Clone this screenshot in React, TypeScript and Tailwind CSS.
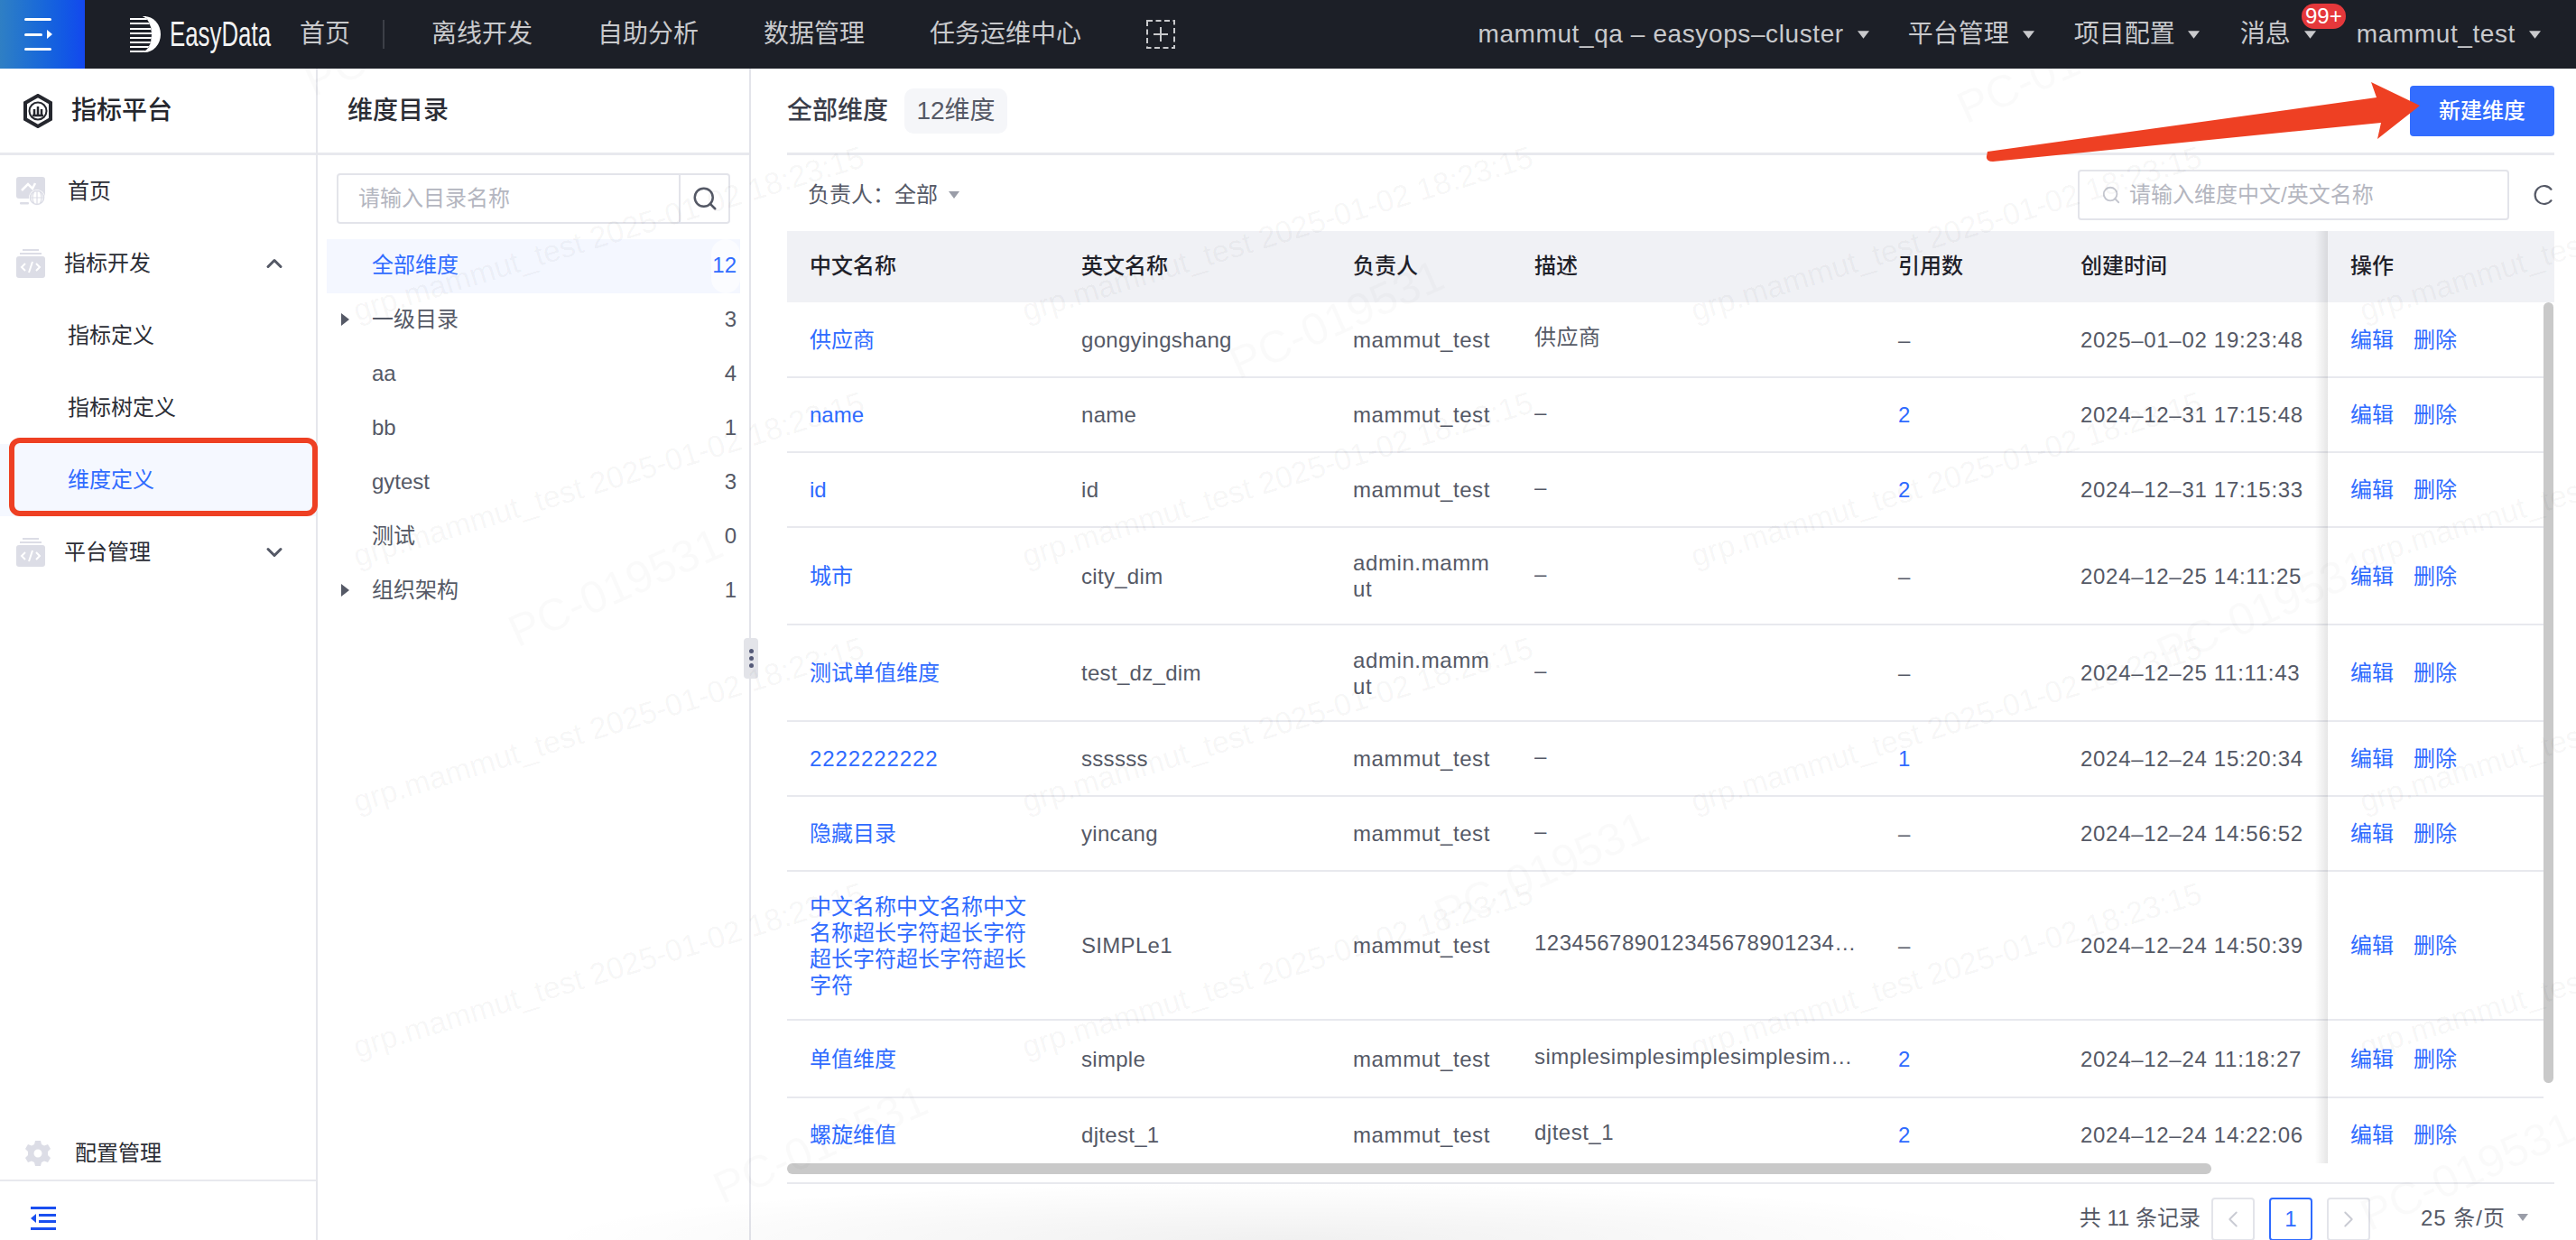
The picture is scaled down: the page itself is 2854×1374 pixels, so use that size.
import { Search, ChevronUp, ChevronDown, ChevronLeft, ChevronRight } from 'lucide-react'

const rows = [
  { name: '供应商', en: 'gongyingshang', owner: 'mammut_test', desc: '供应商', refs: '–', time: '2025–01–02 19:23:48', h: 'h-[84px]' },
  { name: 'name', en: 'name', owner: 'mammut_test', desc: '–', refs: '2', time: '2024–12–31 17:15:48', h: 'h-[83px]' },
  { name: 'id', en: 'id', owner: 'mammut_test', desc: '–', refs: '2', time: '2024–12–31 17:15:33', h: 'h-[83px]' },
  { name: '城市', en: 'city_dim', owner: 'admin.mammut', desc: '–', refs: '–', time: '2024–12–25 14:11:25', h: 'h-[108px]' },
  { name: '测试单值维度', en: 'test_dz_dim', owner: 'admin.mammut', desc: '–', refs: '–', time: '2024–12–25 11:11:43', h: 'h-[107px]' },
  { name: '2222222222', en: 'ssssss', owner: 'mammut_test', desc: '–', refs: '1', time: '2024–12–24 15:20:34', h: 'h-[83px]' },
  { name: '隐藏目录', en: 'yincang', owner: 'mammut_test', desc: '–', refs: '–', time: '2024–12–24 14:56:52', h: 'h-[83px]' },
  { name: '中文名称中文名称中文名称超长字符超长字符超长字符超长字符超长字符', en: 'SIMPLe1', owner: 'mammut_test', desc: '123456789012345678901234567890', refs: '–', time: '2024–12–24 14:50:39', h: 'h-[165px]' },
  { name: '单值维度', en: 'simple', owner: 'mammut_test', desc: 'simplesimplesimplesimplesimplesimple', refs: '2', time: '2024–12–24 11:18:27', h: 'h-[86px]' },
  { name: '螺旋维值', en: 'djtest_1', owner: 'mammut_test', desc: 'djtest_1', refs: '2', time: '2024–12–24 14:22:06', h: 'h-[83px]' },
]

const catalog = [
  { label: '一级目录', count: 3, arrow: true },
  { label: 'aa', count: 4 },
  { label: 'bb', count: 1 },
  { label: 'gytest', count: 3 },
  { label: '测试', count: 0 },
  { label: '组织架构', count: 1, arrow: true },
]

const grpMarks = [
  [398, 348], [1139, 348], [1880, 348], [2621, 348],
  [398, 620], [1139, 620], [1880, 620], [2621, 620],
  [398, 892], [1139, 892], [1880, 892], [2621, 892],
  [398, 1164], [1139, 1164], [1880, 1164], [2621, 1164],
]

const pcMarks = [
  [351, 116], [577, 726], [804, 1343], [1376, 429], [1603, 1040], [2182, 146], [2403, 750], [2629, 1373],
]

const Caret = ({ className }: { className: string }) => (
  <svg viewBox="0 0 12 8" className={className} fill="currentColor">
    <path d="M0 0h12L6 8z" />
  </svg>
)

const HomeIcon = () => (
  <svg viewBox="0 0 32 32" className="w-[32px] h-[32px] text-[#dcdde6]" fill="none">
    <rect x="0" y="0" width="32" height="24" rx="3" fill="currentColor" />
    <path d="M6 15l7-7 5 5 3-6" stroke="#fff" strokeWidth="2.5" />
    <rect x="4" y="28" width="10" height="2.5" rx="1" fill="currentColor" />
    <circle cx="23" cy="23" r="9" fill="#fff" />
    <circle cx="23" cy="23" r="7.5" stroke="currentColor" strokeWidth="1.6" />
    <path d="M15.5 23h15M23 15.5v15M19.5 17c-2 4-2 8 0 12M26.5 17c2 4 2 8 0 12" stroke="currentColor" strokeWidth="1.2" />
  </svg>
)

const CodeIcon = () => (
  <svg viewBox="0 0 32 32" className="w-[32px] h-[32px] text-[#dcdde6]" fill="none">
    <rect x="7" y="0" width="18" height="2" fill="currentColor" />
    <rect x="4" y="4" width="24" height="2" fill="currentColor" />
    <rect x="0" y="8" width="32" height="24" rx="3" fill="currentColor" />
    <path d="M10 16l-4 4 4 4M22 16l4 4-4 4M18 14l-4 12" stroke="#fff" strokeWidth="2" />
  </svg>
)

const NavItem = ({ label, className }: { label: string; className: string }) => (
  <span className={`text-[28px] text-[#c8c9cc] ${className}`}>{label}</span>
)

const App = () => {
  return (
    <div className="relative w-[2854px] h-[1374px] overflow-hidden flex flex-col bg-white font-['Liberation_Sans','Noto_Sans_CJK_SC',sans-serif] text-[24px] text-[#555966]">
      <header className="h-[76px] shrink-0 flex items-center bg-[#1c1f27]">
        <div className="w-[94px] h-full flex flex-col justify-center items-start gap-[10px] pl-[27px] bg-gradient-to-r from-[#2f7fc4] to-[#1447ee]">
          <div className="w-[30px] h-[3px] bg-white rounded-full" />
          <div className="flex items-center gap-[5px]">
            <div className="w-[20px] h-[3px] bg-white rounded-full" />
            <div className="w-0 h-0 border-y-[5px] border-y-transparent border-l-[6px] border-l-white" />
          </div>
          <div className="w-[30px] h-[3px] bg-white rounded-full" />
        </div>

        <svg viewBox="0 0 34 40" className="ml-[50px] w-[34px] h-[40px]" fill="#fff">
          <path d="M14 0h2a18 20 0 0 1 0 40h-2c8-3 10-12 10-20S22 3 14 0z" />
          <path d="M0 0h14c6 2 10 10 10 20s-4 18-10 20H0v-2h20v-3H0v-2h22v-3H0v-2h23v-3H0v-2h24v-3H0v-2h24v-3H0v-2h23V9H0V7h22V4H0V2h18V0z" />
        </svg>
        <div className="ml-[10px] w-[114px] h-[40px] flex items-center">
          <span className="inline-block origin-left scale-x-[0.68] text-[38px] text-[#f2f2f2] leading-none">EasyData</span>
        </div>

        <NavItem label="首页" className="ml-[30px]" />
        <div className="ml-[36px] w-[2px] h-[32px] bg-[#3c3f47]" />
        <NavItem label="离线开发" className="ml-[52px]" />
        <NavItem label="自助分析" className="ml-[72px]" />
        <NavItem label="数据管理" className="ml-[72px]" />
        <NavItem label="任务运维中心" className="ml-[72px]" />
        <svg viewBox="0 0 32 32" className="ml-[72px] w-[32px] h-[32px] text-[#c8c9cc]" fill="none" stroke="currentColor" strokeWidth="2">
          <rect x="1" y="1" width="30" height="30" strokeDasharray="6 3.5" />
          <path d="M16 8v16M8 16h16" />
        </svg>

        <div className="ml-auto flex items-center pr-[39px] text-[#c8c9cc]">
          <span className="text-[28px] tracking-[0.6px]">mammut_qa – easyops–cluster</span>
          <Caret className="ml-[15px] w-[13px] h-[9px]" />
          <NavItem label="平台管理" className="ml-[43px]" />
          <Caret className="ml-[15px] w-[13px] h-[9px]" />
          <NavItem label="项目配置" className="ml-[44px]" />
          <Caret className="ml-[14px] w-[13px] h-[9px]" />
          <NavItem label="消息" className="ml-[45px]" />
          <div className="relative ml-[15px] w-[13px] h-[9px]">
            <Caret className="w-[13px] h-[9px]" />
            <span className="absolute left-[-3px] top-[-30px] w-[49px] h-[28px] rounded-[14px] bg-[#e5383b] text-white text-[24px] leading-[28px] text-center">99+</span>
          </div>
          <span className="ml-[45px] text-[28px] tracking-[0.6px]">mammut_test</span>
          <Caret className="ml-[15px] w-[13px] h-[9px]" />
        </div>
      </header>

      <div className="flex-1 flex min-h-0">
        <aside className="w-[352px] shrink-0 flex flex-col border-r-2 border-[#e6e7ec] text-[#2b2d35]">
          <div className="h-[96px] shrink-0 flex items-center pl-[25px] border-b-[3px] border-[#e8e9ee]">
            <svg viewBox="0 0 34 38" className="w-[34px] h-[38px] text-[#25272e]" fill="none">
              <path d="M17 2l14 8v18l-14 8-14-8V10z" stroke="currentColor" strokeWidth="4" />
              <circle cx="17" cy="19" r="9.5" stroke="currentColor" strokeWidth="2" />
              <path d="M11 24h12M13 17v6M17 14v9M21 17v6" stroke="currentColor" strokeWidth="2.5" />
            </svg>
            <span className="ml-[20px] text-[28px] font-medium text-[#25272e]">指标平台</span>
          </div>
          <div className="h-[80px] flex items-center pl-[18px]">
            <HomeIcon />
            <span className="ml-[25px]">首页</span>
          </div>
          <div className="h-[80px] flex items-center pl-[18px]">
            <CodeIcon />
            <span className="ml-[21px]">指标开发</span>
            <ChevronUp className="ml-auto mr-[32px] w-[28px] h-[28px] text-[#555966]" strokeWidth={2.6} />
          </div>
          <div className="h-[80px] flex items-center pl-[75px]">指标定义</div>
          <div className="h-[80px] flex items-center pl-[75px]">指标树定义</div>
          <div className="h-[80px] flex items-center pl-[75px] bg-[#f5f8ff] text-[#2f6bff]">维度定义</div>
          <div className="h-[80px] flex items-center pl-[18px]">
            <CodeIcon />
            <span className="ml-[21px]">平台管理</span>
            <ChevronDown className="ml-auto mr-[32px] w-[28px] h-[28px] text-[#555966]" strokeWidth={2.6} />
          </div>

          <div className="mt-auto h-[70px] flex items-center pl-[28px] pt-[10px] border-b-2 border-[#e8e9ee]">
            <svg viewBox="0 0 28 28" className="w-[28px] h-[28px] text-[#dcdde6]" fill="currentColor">
              <path fillRule="evenodd" d="M11 0h6l1 4 3 1.500 4-1.500 3 5-3 3v4l3 3-3 5-4-1.500-3 1.500-1 4h-6l-1-4-3-1.500-4 1.500-3-5 3-3v-4l-3-3 3-5 4 1.500 3-1.500zM14 9.500a4.500 4.500 0 1 0 0 9 4.500 4.500 0 0 0 0-9z" />
            </svg>
            <span className="ml-[27px]">配置管理</span>
          </div>
          <div className="h-[65px] flex items-center pl-[34px] pt-[16px]">
            <svg viewBox="0 0 28 26" className="w-[28px] h-[26px] text-[#1a4ff0]" fill="currentColor">
              <rect width="28" height="3" />
              <rect x="9" y="8" width="19" height="3" />
              <rect x="9" y="15" width="19" height="3" />
              <rect y="23" width="28" height="3" />
              <path d="M0 13l6-5v10z" />
            </svg>
          </div>
        </aside>

        <section className="relative w-[480px] shrink-0 flex flex-col border-r-2 border-[#e3e4ea]">
          <div className="h-[96px] shrink-0 flex items-center pl-[33px] border-b-[3px] border-[#e8e9ee] text-[28px] font-medium text-[#2b2d35]">
            维度目录
          </div>
          <div className="mt-[20px] mx-[21px] h-[56px] flex border-2 border-[#e3e4ea] rounded-[4px]">
            <div className="flex-1 flex items-center pl-[22px] text-[#b4b6c0]">请输入目录名称</div>
            <div className="w-[55px] flex items-center justify-center border-l-2 border-[#e3e4ea]">
              <Search className="w-[30px] h-[30px] text-[#555966]" strokeWidth={2} />
            </div>
          </div>
          <div className="mt-[17px] mx-[10px] h-[60px] flex items-center justify-between pl-[50px] bg-[#f4f7ff] text-[#2f6bff]">
            <span className="pb-[2px]">全部维度</span>
            <span className="h-full w-[32px] flex items-center justify-end pr-[4px] pb-[2px] rounded-[16px] bg-white/60">12</span>
          </div>
          {catalog.map(item => (
            <div key={item.label} className="relative mx-[10px] h-[60px] flex items-center justify-between pl-[50px] pr-[4px] pb-[2px]">
              {item.arrow && (
                <div className="absolute left-[16px] w-0 h-0 border-y-[7px] border-y-transparent border-l-[9px] border-l-[#555966]" />
              )}
              <span>{item.label}</span>
              <span>{item.count}</span>
            </div>
          ))}
          <div className="absolute right-[-10px] top-[631px] w-[16px] h-[45px] flex flex-col items-center justify-center gap-[3px] rounded-[4px] bg-[#e3e4e9]">
            <div className="w-[5px] h-[5px] rounded-full bg-[#555a78]" />
            <div className="w-[5px] h-[5px] rounded-full bg-[#555a78]" />
            <div className="w-[5px] h-[5px] rounded-full bg-[#555a78]" />
          </div>
        </section>

        <main className="flex-1 min-w-0 flex flex-col pl-[40px] pr-[24px]">
          <div className="h-[96px] shrink-0 flex items-center border-b-[3px] border-[#e8e9ee]">
            <span className="text-[28px] font-medium text-[#3a3d49]">全部维度</span>
            <span className="ml-[18px] h-[50px] w-[114px] flex items-center justify-center rounded-[10px] bg-[#f5f6f9] text-[28px] text-[#555966]">12维度</span>
            <button className="ml-auto h-[56px] w-[160px] rounded-[4px] bg-[#336dff] text-white text-[24px] font-medium">新建维度</button>
          </div>

          <div className="h-[84px] shrink-0 flex items-center pl-[23px] pt-[4px]">
            <span>负责人：</span>
            <span>全部</span>
            <Caret className="ml-[12px] w-[12px] h-[8px] text-[#9a9da8]" />
            <div className="ml-auto w-[478px] h-[56px] flex items-center pl-[24px] border-2 border-[#e3e4ea] rounded-[4px] text-[#b4b6c0]">
              <Search className="w-[22px] h-[22px] text-[#c4c6cf]" strokeWidth={2} />
              <span className="ml-[9px]">请输入维度中文/英文名称</span>
            </div>
            <svg viewBox="0 0 24 24" className="ml-[26px] w-[24px] h-[24px] text-[#555966]" fill="none" stroke="currentColor" strokeWidth="2.2">
              <path d="M21 6.500A10 10 0 1 0 21 17.500" />
            </svg>
          </div>

          <div className="relative h-[1045px] shrink-0">
            <div className="h-[1033px] overflow-hidden">
              <div className="h-[79px] grid grid-cols-[326px_301px_201px_403px_202px_274px_1fr] items-center bg-[#f0f1f5] font-medium text-[#1f2129] pb-[2px]">
                <div className="pl-[25px]">中文名称</div>
                <div>英文名称</div>
                <div>负责人</div>
                <div>描述</div>
                <div>引用数</div>
                <div>创建时间</div>
                <div className="pl-[25px]">操作</div>
              </div>
              {rows.map(row => (
                <div key={row.en} className={`${row.h} w-[1946px] grid grid-cols-[326px_301px_201px_403px_202px_274px_1fr] items-center border-b-2 border-[#e8e9ee] leading-[29px]`}>
                  <div className={`pl-[25px] w-[266px] break-all text-[#2f6bff] ${/^\d+$/.test(row.name) ? 'tracking-[0.9px]' : ''}`}>{row.name}</div>
                  <div className="tracking-[0.3px]">{row.en}</div>
                  <div className="w-[160px] break-all tracking-[0.6px]">{row.owner}</div>
                  <div className="w-[358px] truncate mb-[6px] tracking-[0.5px]">{row.desc}</div>
                  <div className={row.refs === '–' ? '' : 'text-[#2f6bff]'}>{row.refs}</div>
                  <div className="tracking-[0.7px]">{row.time}</div>
                  <div className="pl-[25px] flex gap-[22px] text-[#2f6bff]">
                    <span>编辑</span>
                    <span>删除</span>
                  </div>
                </div>
              ))}
            </div>
            <div className="w-[1578px] h-[12px] rounded-full bg-[#c9c9c9]" />
            <div className="absolute left-[1693px] top-0 w-[14px] h-[1033px] bg-gradient-to-r from-transparent to-black/10" />
            <div className="absolute left-[1946px] top-[79px] w-[11px] h-[865px] rounded-full bg-[#c9c9c9]" />
          </div>

          <div className="mt-[9px] flex-1 min-h-0 flex items-start justify-end pt-[15px] pr-[29px] border-t-2 border-[#e8e9ee]">
            <span className="mt-[5px]">共 11 条记录</span>
            <div className="ml-[12px] w-[48px] h-[48px] flex items-center justify-center border-2 border-[#e3e4ea] rounded-[4px]">
              <ChevronLeft className="w-[30px] h-[30px] text-[#c9cbd3]" strokeWidth={1.5} />
            </div>
            <div className="ml-[16px] w-[48px] h-[48px] flex items-center justify-center border-2 border-[#2f6bff] rounded-[4px] text-[#2f6bff]">1</div>
            <div className="ml-[16px] w-[48px] h-[48px] flex items-center justify-center border-2 border-[#e3e4ea] rounded-[4px]">
              <ChevronRight className="w-[30px] h-[30px] text-[#c9cbd3]" strokeWidth={1.5} />
            </div>
            <span className="ml-[56px] mt-[5px] tracking-[1px]">25 条/页</span>
            <Caret className="ml-[13px] mt-[18px] w-[12px] h-[8px] text-[#9a9da8]" />
          </div>
        </main>
      </div>

      {/* shadow smudge along the bottom edge of the capture */}
      <div className="absolute left-[600px] top-[1310px] w-[1650px] h-[130px] pointer-events-none bg-[radial-gradient(closest-side,rgba(0,0,0,0.06),transparent)]" />

      {/* watermark layer */}
      <div className="absolute inset-x-0 top-[76px] bottom-0 overflow-hidden pointer-events-none">
        {grpMarks.map(([x, y]) => (
          <span
            key={`${x}-${y}`}
            className="absolute origin-bottom-left -rotate-[17deg] whitespace-nowrap text-[34px] leading-[40px] text-black/[0.045]"
            style={{ left: x, top: y - 100 }}
          >
            grp.mammut_test 2025-01-02 18:23:15
          </span>
        ))}
        {pcMarks.map(([x, y]) => (
          <span
            key={`${x}-${y}`}
            className="absolute origin-bottom-left -rotate-[24deg] whitespace-nowrap text-[50px] leading-[52px] text-black/[0.018]"
            style={{ left: x, top: y - 128 }}
          >
            PC-019531
          </span>
        ))}
      </div>

      {/* red annotations */}
      <div className="absolute left-[10px] top-[485px] w-[342px] h-[87px] border-[6px] border-[#ee4023] rounded-[12px] pointer-events-none" />
      <svg viewBox="0 0 500 100" className="absolute left-[2190px] top-[85px] w-[500px] h-[100px] pointer-events-none" fill="#ee4023">
        <path d="M12 83L443 23L437 6L491 32L444 69L448 51L18 94Q10 94 11 88Z" />
      </svg>
    </div>
  )
}

export default App
